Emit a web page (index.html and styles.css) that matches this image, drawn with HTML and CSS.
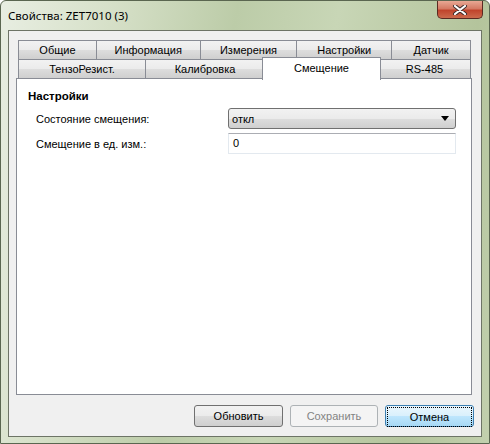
FILE: index.html
```html
<!DOCTYPE html>
<html lang="ru">
<head>
  <meta charset="UTF-8">
  <title>Свойства: ZET7010 (3)</title>
  <link rel="stylesheet" href="styles.css">
</head>
<body>

  <div class="window">
    <div class="titlebar">
      <span class="caption">Свойства: ZET7010 (3)</span>
      <a href="#" class="close">
        <svg width="16" height="10" viewBox="0 0 16 10">
          <path d="M3 1 L13 9 M13 1 L3 9" stroke="#3a2a28" stroke-width="4" stroke-linecap="round"/>
          <path d="M3 1 L13 9 M13 1 L3 9" stroke="#fff" stroke-width="2.2" stroke-linecap="round"/>
        </svg>
      </a>
    </div>

    <div class="client">
      <div class="tabs">
        <div class="tab-row">
          <a href="#" class="tab w78">Общие</a>
          <a href="#" class="tab w104">Информация</a>
          <a href="#" class="tab w97">Измерения</a>
          <a href="#" class="tab w95">Настройки</a>
          <a href="#" class="tab w79">Датчик</a>
        </div>
        <div class="tab-row front">
          <a href="#" class="tab w127">ТензоРезист.</a>
          <a href="#" class="tab w119">Калибровка</a>
          <a href="#" class="tab w115 selected">Смещение</a>
          <a href="#" class="tab w92">RS-485</a>
        </div>
      </div>

      <div class="panel">
        <p class="group">Настройки</p>
        <div class="field">
          <label>Состояние смещения:</label>
          <div class="combo">
            <span>откл</span>
            <svg width="8" height="5" viewBox="0 0 8 5"><path d="M0 0 H8 L4 5 Z" fill="#000"/></svg>
          </div>
        </div>
        <div class="field">
          <label>Смещение в ед. изм.:</label>
          <div class="edit">0</div>
        </div>
      </div>

      <div class="buttons">
        <a href="#" class="btn">Обновить</a>
        <a href="#" class="btn disabled">Сохранить</a>
        <a href="#" class="btn default"><span>Отмена</span></a>
      </div>
    </div>
  </div>

</body>
</html>
```

FILE: styles.css
```css
body {
  margin: 0;
  background: #fff;
  font-family: "Liberation Sans", Arial, sans-serif;
  font-size: 11px;
  color: #000;
}

a {
  color: #000;
  text-decoration: none;
}

.window {
  width: 490px;
  height: 444px;
  box-sizing: border-box;
  display: flex;
  flex-direction: column;
  background: linear-gradient(100deg, #e8eee2 0%, #d6e0c8 20%, #bccca8 42%, #c8d6b6 60%, #b4c49c 85%, #c2d0ae 100%);
  border: 1px solid #5a6650;
  border-radius: 6px 6px 0 0;
}

.titlebar {
  height: 29px;
  display: flex;
  justify-content: space-between;
  align-items: flex-start;
  padding-left: 7px;
}

.caption {
  font-family: "Noto Sans", "Open Sans", sans-serif;
  font-size: 11.5px;
  line-height: 29px;
}

.close {
  width: 46px;
  height: 18px;
  margin-right: 6px;
  box-sizing: border-box;
  border: 1px solid #5a2a22;
  border-top: none;
  border-radius: 0 0 5px 5px;
  background: linear-gradient(#e8a894 0%, #d47a64 45%, #c0442c 55%, #cc6a4c 100%);
  display: flex;
  align-items: center;
  justify-content: center;
}

.client {
  flex: 1;
  margin: 0 7px 6px 7px;
  background: #f0f0f0;
  border: 1px solid #6d7466;
  padding: 7px 9px 0 7px;
}

/* tab strip, two rows */
.tabs {
  margin: 0 1px 0 2px;
}

.tab-row {
  display: flex;
  height: 19px;
  margin-top: 2px;
}

.tab-row.front {
  margin-top: 0;
  position: relative;
  z-index: 1;
}

.tab {
  box-sizing: border-box;
  height: 20px;
  border: 1px solid #898c95;
  border-right: none;
  background: linear-gradient(#f2f2f2 0%, #ebebeb 50%, #dddddd 51%, #cfcfcf 100%);
  text-align: center;
  line-height: 18px;
}

.tab:last-child {
  border-right: 1px solid #898c95;
}

.tab.selected {
  background: #fff;
  border-right: 1px solid #898c95;
  border-bottom: none;
  height: 23px;
  margin: -2px -2px 0 -2px;
  line-height: 20px;
  position: relative;
  z-index: 2;
}

.tab.selected + .tab {
  border-left: none;
}

.w78 { width: 78px; }
.w79 { width: 80px; }
.w92 { width: 92px; }
.w95 { width: 95px; }
.w97 { width: 97px; }
.w104 { width: 104px; }
.w115 { width: 119px; }
.w119 { width: 119px; }
.w127 { width: 127px; }

/* page of the selected tab */
.panel {
  height: 317px;
  box-sizing: border-box;
  background: #fff;
  border: 1px solid #898c95;
  padding: 11px 15px 0 11px;
}

.group {
  margin: 0 0 5px 0;
  font-weight: bold;
  font-size: 11.5px;
  line-height: 13px;
}

.field {
  display: flex;
  align-items: center;
  height: 21px;
  margin-bottom: 4px;
}

.field label {
  width: 192px;
  padding-left: 8px;
}

.combo {
  flex: 1;
  height: 21px;
  box-sizing: border-box;
  border: 1px solid #707070;
  border-radius: 3px;
  background: linear-gradient(#f2f2f2 0%, #ebebeb 50%, #dddddd 51%, #cfcfcf 100%);
  display: flex;
  align-items: center;
  justify-content: space-between;
  padding: 0 6px 0 3px;
}

.edit {
  flex: 1;
  height: 21px;
  box-sizing: border-box;
  border: 1px solid #e3e9ef;
  border-top-color: #abadb3;
  padding: 3px 4px;
  background: #fff;
}

/* dialog buttons */
.buttons {
  display: flex;
  justify-content: flex-end;
  gap: 7px;
  margin-top: 10px;
  margin-right: -2px;
}

.btn {
  width: 89px;
  height: 22px;
  box-sizing: border-box;
  border: 1px solid #707070;
  border-radius: 3px;
  background: linear-gradient(#f2f2f2 0%, #ebebeb 50%, #dddddd 51%, #cfcfcf 100%);
  text-align: center;
  line-height: 20px;
}

.btn.disabled {
  width: 88px;
  background: #f4f4f4;
  border-color: #adb2b5;
  color: #838383;
}

.btn.default {
  border-color: #3c7fb1;
  background: linear-gradient(#eaf6fd 0%, #d9f0fc 50%, #bee6fd 51%, #a7d9f5 100%);
  padding: 1px;
}

.btn.default span {
  display: block;
  height: 18px;
  line-height: 18px;
  border: 1px dotted #000;
}
```
